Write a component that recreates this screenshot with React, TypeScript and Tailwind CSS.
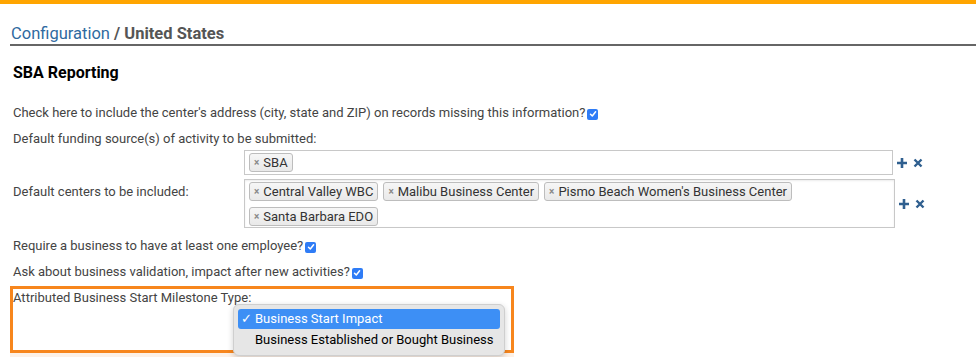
import React from "react";

function Check() {
  return (
    <span className="inline-flex items-center justify-center w-[11px] h-[11px] rounded-[2px] bg-[#2f7cf6] ml-[2px] align-[-1px]">
      <svg width="8" height="8" viewBox="0 0 8 8">
        <path d="M1.5 4.2 L3.3 6 L6.6 1.8" stroke="white" strokeWidth="1.5" fill="none" strokeLinecap="round" strokeLinejoin="round" />
      </svg>
    </span>
  );
}

function Tag({ label }: { label: string }) {
  return (
    <span className="inline-flex items-center h-[19px] px-[4px] border border-[#bdbdbd] rounded-[3px] bg-gradient-to-b from-[#f6f6f6] to-[#e9e9e9] text-[13px] text-[#333] leading-none whitespace-nowrap">
      <span className="text-[10px] text-[#888] mr-[4px] font-bold">×</span>
      {label}
    </span>
  );
}

function Actions() {
  return (
    <div className="flex items-center gap-[5px] ml-[3px] text-[#2f5f8f]">
      <svg width="12" height="12" viewBox="0 0 12 12">
        <path d="M6 1 V11 M1 6 H11" stroke="currentColor" strokeWidth="2.6" />
      </svg>
      <svg width="10" height="10" viewBox="0 0 10 10">
        <path d="M1.5 1.5 L8.5 8.5 M8.5 1.5 L1.5 8.5" stroke="currentColor" strokeWidth="2.4" />
      </svg>
    </div>
  );
}

export default function App() {
  return (
    <div
      className="w-[976px] h-[357px] overflow-hidden bg-white relative"
      style={{ fontFamily: 'Roboto, "Noto Sans", sans-serif' }}
    >
      <div className="h-[4px] bg-[#ffa500]" />
      <div className="ml-[10px] mt-[19px] border-b-2 border-[#666] leading-[21px] text-[16.5px] pl-[1px]">
        <span className="text-[#2f6aa0]">Configuration</span>
        <span className="text-[#555] font-bold"> / United States</span>
      </div>

      <div className="pl-[13px] text-[13px] text-[#444] leading-[18px]">
        <h2 className="mt-[17px] text-[16px] font-bold text-black leading-[20px]">SBA Reporting</h2>

        <p className="mt-[21px]">
          Check here to include the center's address (city, state and ZIP) on records missing this information?
          <Check />
        </p>
        <p className="mt-[8px]">Default funding source(s) of activity to be submitted:</p>

        <div className="flex items-center mt-[2px]">
          <div className="w-[231px] shrink-0" />
          <div className="w-[649px] h-[25px] border border-[#c8c8c8] flex items-center px-[4px]">
            <Tag label="SBA" />
          </div>
          <Actions />
        </div>

        <div className="flex items-center mt-[4px]">
          <div className="w-[231px] shrink-0 self-start pt-[4px]">Default centers to be included:</div>
          <div className="w-[651px] h-[49px] border border-[#c8c8c8] flex flex-wrap content-start gap-x-[5px] gap-y-[6px] px-[4px] pt-[2px] shadow-[inset_0_1px_2px_rgba(0,0,0,0.08)]">
            <Tag label="Central Valley WBC" />
            <Tag label="Malibu Business Center" />
            <Tag label="Pismo Beach Women's Business Center" />
            <Tag label="Santa Barbara EDO" />
          </div>
          <Actions />
        </div>

        <p className="mt-[9px]">
          Require a business to have at least one employee?
          <Check />
        </p>
        <p className="mt-[8px]">
          Ask about business validation, impact after new activities?
          <Check />
        </p>
      </div>

      <div className="ml-[10px] mt-[5px] w-[504px] h-[67px] border-[3px] border-[#f7861d] relative">
        <p className="text-[13px] text-[#444] leading-[18px]">Attributed Business Start Milestone Type:</p>
      </div>
      <div className="ml-[10px] w-[504px] h-[6px] bg-[#fdf1e7]" />

      <div className="absolute left-[233px] top-[304px] w-[272px] rounded-[6px] bg-[#e6e6e6] border border-[#cfcfcf] shadow-[0_2px_6px_rgba(0,0,0,0.18)] p-[4px] text-[13px] whitespace-nowrap">
        <div className="h-[20px] rounded-[3px] bg-[#3d8ff5] text-white flex items-center pl-[3px]">
          <span className="w-[14px]">✓</span>
          <span>Business Start Impact</span>
        </div>
        <div className="h-[22px] flex items-center pl-[17px] text-black">Business Established or Bought Business</div>
      </div>
    </div>
  );
}
